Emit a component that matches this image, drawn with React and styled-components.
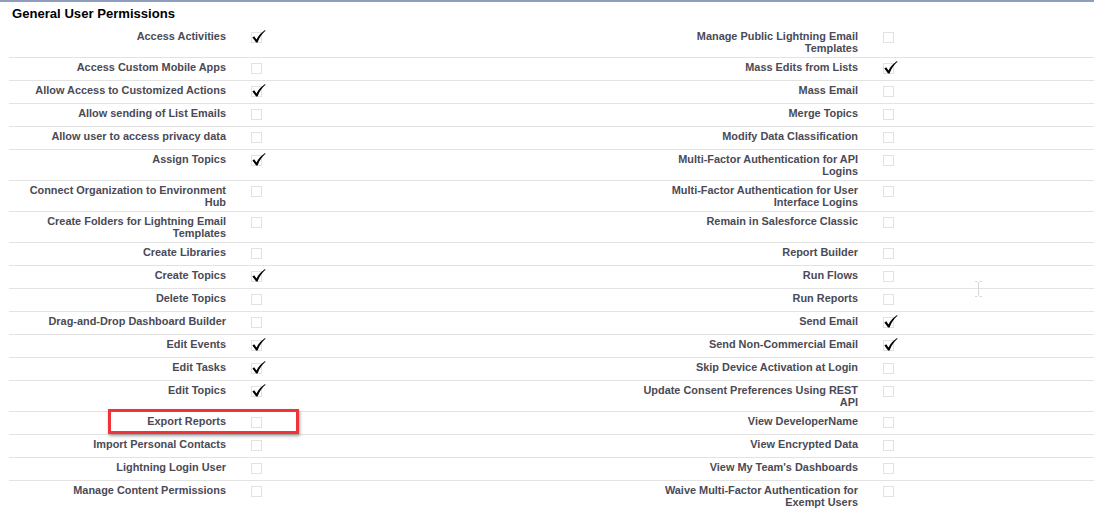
import React from "react";
import styled, { createGlobalStyle } from "styled-components";

const GlobalStyle = createGlobalStyle`
  html, body {
    margin: 0;
    padding: 0;
    background: #fff;
  }
  body {
    font-family: "Liberation Sans", Arial, sans-serif;
  }
`;

const rows = [
  ["Access Activities", true, "Manage Public Lightning Email Templates", false],
  ["Access Custom Mobile Apps", false, "Mass Edits from Lists", true],
  ["Allow Access to Customized Actions", true, "Mass Email", false],
  ["Allow sending of List Emails", false, "Merge Topics", false],
  ["Allow user to access privacy data", false, "Modify Data Classification", false],
  ["Assign Topics", true, "Multi-Factor Authentication for API Logins", false],
  ["Connect Organization to Environment Hub", false, "Multi-Factor Authentication for User Interface Logins", false],
  ["Create Folders for Lightning Email Templates", false, "Remain in Salesforce Classic", false],
  ["Create Libraries", false, "Report Builder", false],
  ["Create Topics", true, "Run Flows", false],
  ["Delete Topics", false, "Run Reports", false],
  ["Drag-and-Drop Dashboard Builder", false, "Send Email", true],
  ["Edit Events", true, "Send Non-Commercial Email", true],
  ["Edit Tasks", true, "Skip Device Activation at Login", false],
  ["Edit Topics", true, "Update Consent Preferences Using REST API", false],
  ["Export Reports", false, "View DeveloperName", false],
  ["Import Personal Contacts", false, "View Encrypted Data", false],
  ["Lightning Login User", false, "View My Team's Dashboards", false],
  ["Manage Content Permissions", false, "Waive Multi-Factor Authentication for Exempt Users", false],
];

const Checkbox = ({ checked }) => (
  <CheckSvg width="18" height="16" viewBox="0 0 18 16">
    <rect
      x="0.5"
      y="3.5"
      width="10"
      height="10"
      fill="none"
      stroke="#c4c4c4"
      strokeWidth="1"
      strokeDasharray="1 1"
    />
    {checked && (
      <path
        d="M1.4 8.4 L3.2 7.3 L5.5 10.4 C7.6 6.6 10.6 3.4 14.1 1.1 L14.5 1.7 C11.2 4.4 8.4 8.3 6.6 13.4 L5.1 13.4 Z"
        fill="#000"
      />
    )}
  </CheckSvg>
);

const App = () => {
  return (
    <Page>
      <GlobalStyle />
      <Section>
        <Header>General User Permissions</Header>
        <Table>
          {rows.map(([l1, c1, l2, c2]) => (
            <Row key={l1}>
              <Label $pl={12} $pr={7}>{l1}</Label>
              <Data $pl={18}>
                <Checkbox checked={c1} />
              </Data>
              <Label $pl={0} $pr={10}>{l2}</Label>
              <Data $pl={15}>
                <Checkbox checked={c2} />
              </Data>
            </Row>
          ))}
        </Table>
      </Section>
      <Highlight />
      <Cursor width="9" height="16" viewBox="0 0 9 16">
        <path
          d="M1 0.5 H3.5 M5.5 0.5 H8 M4.5 1 V15 M1 15.5 H3.5 M5.5 15.5 H8"
          stroke="#d8d8d8"
          strokeWidth="1"
          fill="none"
        />
      </Cursor>
    </Page>
  );
};

export default App;

const Page = styled.div`
  position: relative;
  width: 1094px;
  min-height: 513px;
  overflow: hidden;
`;

const Section = styled.div`
  border-top: 2px solid #8f9ebf;
`;

const Header = styled.h3`
  margin: 0;
  padding: 4px 12px 5px;
  height: 16px;
  line-height: 16px;
  font-size: 13.1px;
  font-weight: bold;
  color: #000;
`;

const Table = styled.div`
  margin-left: 9px;
`;

const Row = styled.div`
  display: grid;
  grid-template-columns: 224px 408px 227px 1fr;
  border-bottom: 1px solid #e3e3e3;

  &:last-child {
    border-bottom: none;
  }
`;

const Label = styled.div`
  padding: 3px ${(p) => p.$pr}px 3px ${(p) => p.$pl}px;
  text-align: right;
  font-size: 10.92px;
  line-height: 12px;
  font-weight: bold;
  color: #4a4a56;
`;

const Data = styled.div`
  padding: 2px 0 4px ${(p) => p.$pl}px;
  height: 16px;
`;

const CheckSvg = styled.svg`
  display: block;
  overflow: visible;
`;

const Highlight = styled.div`
  position: absolute;
  left: 108px;
  top: 409px;
  width: 185px;
  height: 19px;
  border: 3px solid #ef3339;
  box-shadow: 1px 2px 3px rgba(0, 0, 0, 0.35);
  pointer-events: none;
`;

const Cursor = styled.svg`
  position: absolute;
  left: 974px;
  top: 281px;
`;
